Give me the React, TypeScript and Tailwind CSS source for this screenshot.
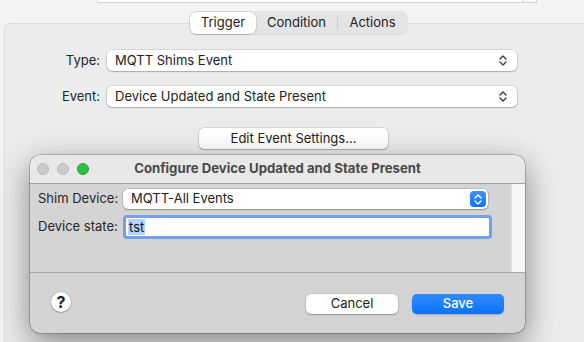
import React from "react";

const font = { fontFamily: "Inter, 'Noto Sans', sans-serif" };

function UpDown({ color = "#3a3a3a" }: { color?: string }) {
  return (
    <svg width="8" height="11" viewBox="0 0 8 11" fill="none">
      <path d="M1 4 L4 1 L7 4" stroke={color} strokeWidth="1.4" strokeLinecap="round" strokeLinejoin="round" />
      <path d="M1 7 L4 10 L7 7" stroke={color} strokeWidth="1.4" strokeLinecap="round" strokeLinejoin="round" />
    </svg>
  );
}

function Popup({ text, w }: { text: string; w: string }) {
  return (
    <div
      className={`${w} h-[21px] bg-white rounded-[5px] flex items-center justify-between pl-[8px] pr-[10px] text-[13px] text-[#222] shadow-[0_0_0_0.5px_rgba(0,0,0,0.18),0_1px_1.5px_rgba(0,0,0,0.22)]`}
    >
      <span>{text}</span>
      <UpDown />
    </div>
  );
}

export default function App() {
  return (
    <div className="relative w-[584px] h-[342px] overflow-hidden bg-[#f3f3f3]" style={font}>
      {/* top text field remnant */}
      <div className="flex ml-[97px] w-[440px] h-[3px]">
        <div className="flex-1 bg-white border-x border-b border-[#d4d4d4]" />
        <div className="w-[14px] bg-[#f6f6f6] border-r border-b border-[#d4d4d4]" />
      </div>

      {/* group box */}
      <div className="ml-[4px] mt-[20px] w-[600px] h-[340px] bg-[#ececec] border border-[#dcdcdc] rounded-[6px]">
        {/* segmented tabs */}
        <div className="-mt-[12px] ml-[185px] flex w-[217px] h-[22px] bg-[#e4e4e4] rounded-[6px] shadow-[0_0_0_0.5px_rgba(0,0,0,0.1)] text-[13px] text-[#222]">
          <div className="w-[66px] h-full flex items-center justify-center bg-white rounded-[6px] shadow-[0_0_0_0.5px_rgba(0,0,0,0.15),0_1px_1px_rgba(0,0,0,0.15)]">
            Trigger
          </div>
          <div className="w-[81px] flex items-center justify-center">Condition</div>
          <div className="w-px my-[5px] bg-[#cacaca]" />
          <div className="flex-1 flex items-center justify-center">Actions</div>
        </div>

        <div className="mt-[16px] flex items-center">
          <div className="w-[95px] text-right text-[13px] text-[#262626]">Type:</div>
          <div className="ml-[7px]">
            <Popup text="MQTT Shims Event" w="w-[410px]" />
          </div>
        </div>
        <div className="mt-[15px] flex items-center">
          <div className="w-[95px] text-right text-[13px] text-[#262626]">Event:</div>
          <div className="ml-[7px]">
            <Popup text="Device Updated and State Present" w="w-[410px]" />
          </div>
        </div>
        <div className="mt-[21px] ml-[194px] w-[189px] h-[21px] bg-white rounded-[5px] flex items-center justify-center text-[13px] text-[#222] shadow-[0_0_0_0.5px_rgba(0,0,0,0.18),0_1px_1.5px_rgba(0,0,0,0.22)]">
          Edit Event Settings...
        </div>
      </div>

      {/* configure sheet window */}
      <div className="absolute left-[30px] top-[155px] w-[495px] h-[178px] rounded-[10px] overflow-hidden bg-[#d4d4d4] flex flex-col shadow-[0_0_0_0.5px_rgba(0,0,0,0.4),0_10px_32px_rgba(0,0,0,0.45)]">
        <div className="relative h-[29px] shrink-0 bg-[#e8e8e8] border-b border-[#a3a3a3] flex items-center justify-center">
          <div className="absolute left-[7px] top-[8px] flex gap-[8px]">
            <div className="w-[12px] h-[12px] rounded-full bg-[#cbcbcb] border border-[#b9b9b9]" />
            <div className="w-[12px] h-[12px] rounded-full bg-[#cbcbcb] border border-[#b9b9b9]" />
            <div className="w-[12px] h-[12px] rounded-full bg-[#29c33f] border border-[#22a836]" />
          </div>
          <span className="text-[13.2px] font-bold text-[#4a4a4a]">Configure Device Updated and State Present</span>
        </div>

        <div className="flex h-[88px] shrink-0">
          <div className="flex-1 pl-[8px] pt-[5px]">
            <div className="flex items-center">
              <div className="w-[85px] text-[13px] text-[#262626]">Shim Device:</div>
              <div className="w-[365px] h-[20px] bg-white rounded-[5px] flex items-center justify-between pl-[8px] pr-[2px] text-[13px] text-[#222] shadow-[0_0_0_0.5px_rgba(0,0,0,0.18),0_1px_1.5px_rgba(0,0,0,0.25)]">
                <span>MQTT-All Events</span>
                <div className="w-[16px] h-[16px] rounded-[4px] bg-gradient-to-b from-[#3d92ff] to-[#0a72f5] flex items-center justify-center">
                  <UpDown color="#ffffff" />
                </div>
              </div>
            </div>
            <div className="mt-[6px] flex items-center">
              <div className="w-[85px] text-[13px] text-[#262626]">Device state:</div>
              <div className="w-[369px] h-[24px] rounded-[4px] border-[3px] border-[#74a0ea] bg-white flex items-center pl-[2px]">
                <span className="bg-[#b3d4ff] text-[13px] text-[#111] leading-[16px] px-[1px]">tst</span>
              </div>
            </div>
          </div>
          <div className="w-[14px] bg-[#f6f6f6] border-l border-[#e2e2e2]" />
        </div>

        <div className="flex-1 border-t border-[#a8a8a8] flex items-start pt-[19px] pl-[21px] pr-[21px]">
          <div className="w-[20px] h-[20px] rounded-full bg-white flex items-center justify-center text-[16px] font-bold text-[#222] shadow-[0_0_0_0.5px_rgba(0,0,0,0.15),0_1px_1.5px_rgba(0,0,0,0.25)]">
            ?
          </div>
          <div className="flex-1" />
          <div className="mt-[2px] w-[92px] h-[20px] bg-white rounded-[5px] flex items-center justify-center text-[13px] text-[#222] shadow-[0_0_0_0.5px_rgba(0,0,0,0.15),0_1px_1.5px_rgba(0,0,0,0.25)]">
            Cancel
          </div>
          <div className="mt-[2px] ml-[14px] w-[92px] h-[20px] rounded-[5px] bg-gradient-to-b from-[#2f8bff] to-[#0a72f8] flex items-center justify-center text-[13px] font-medium text-white shadow-[0_1px_1.5px_rgba(0,0,0,0.2)]">
            Save
          </div>
        </div>
      </div>
    </div>
  );
}
